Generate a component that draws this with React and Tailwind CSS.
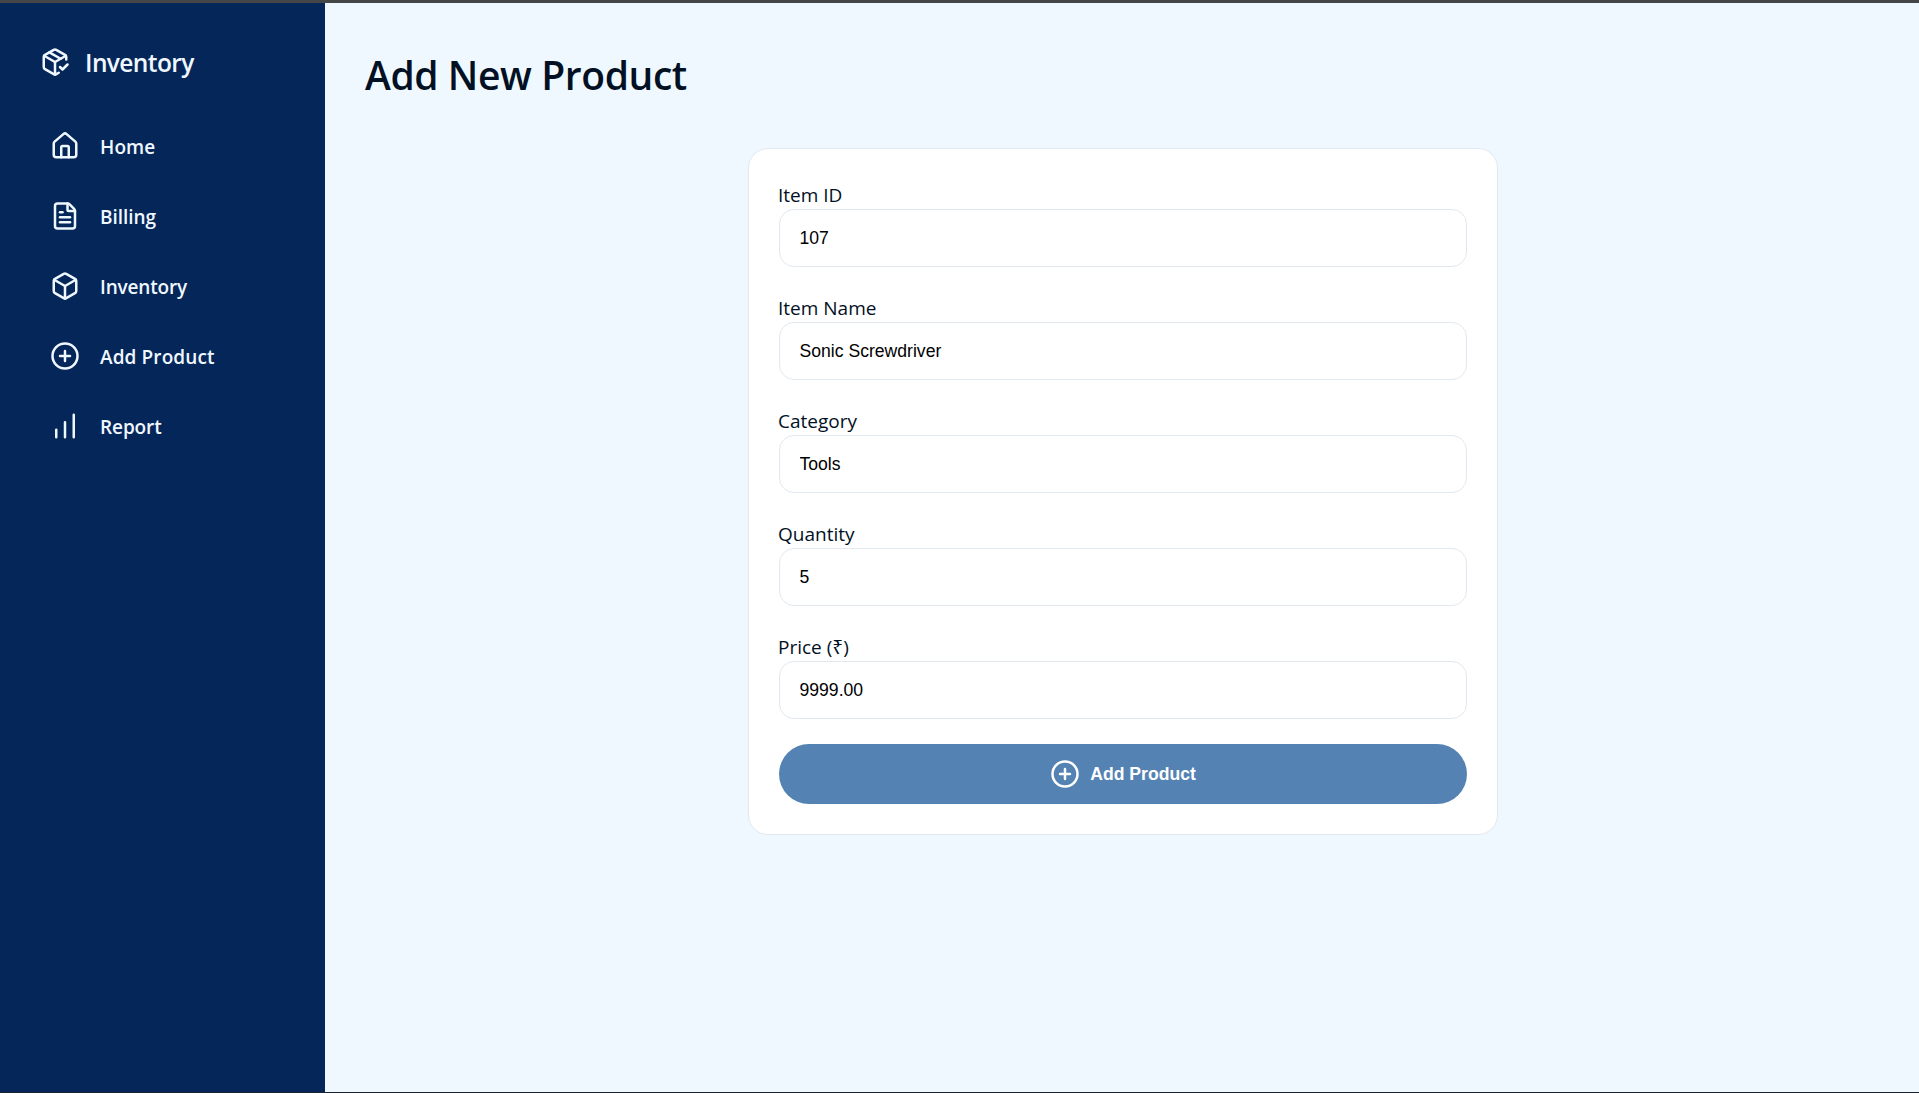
import { House, FileText, Box, CirclePlus, PackageCheck } from "lucide-react";

function Bars({ size }) {
  return (
    <svg width={size} height={size} viewBox="0 0 24 24" fill="none" stroke="currentColor" strokeWidth="2" strokeLinecap="round">
      <path d="M5 21v-6M12 21V9M19 21V3" />
    </svg>
  );
}

const nav = [
  { label: "Home", Icon: House, text: "tracking-[0.1px]" },
  { label: "Billing", Icon: FileText, text: "tracking-[-0.05px]" },
  { label: "Inventory", Icon: Box, text: "tracking-[-0.17px]" },
  { label: "Add Product", Icon: CirclePlus, text: "tracking-[0.1px]" },
  { label: "Report", Icon: Bars, text: "tracking-[-0.1px]" },
];

const fields = [
  { label: "Item ID", value: "107" },
  { label: "Item Name", value: "Sonic Screwdriver" },
  { label: "Category", value: "Tools" },
  { label: "Quantity", value: "5" },
  { label: "Price (₹)", value: "9999.00" },
];

export default function App() {
  return (
    <div className="flex h-[1093px] border-t-3 border-b border-t-[#444648] border-b-[#1b2230] bg-[#f0f8ff] font-['Open_Sans','Noto_Sans',sans-serif] text-[#021024]">
      <aside className="w-[325px] shrink-0 bg-[#052659] text-[#f0f8ff]">
        <div className="flex h-[76px] items-center gap-[15px] pt-[42px] pl-10">
          <PackageCheck size={30} />
          <span className="pt-0.5 text-[24.5px] leading-[34px] font-semibold tracking-[-0.6px]">Inventory</span>
        </div>
        <nav className="mt-[52px] flex flex-col gap-10 pl-[50px]">
          {nav.map(({ label, Icon, text }) => (
            <a key={label} className="flex h-[30px] items-center gap-5">
              <Icon size={30} />
              <span className={`${text} pt-[3px] text-[19px] font-semibold`}>{label}</span>
            </a>
          ))}
        </nav>
      </aside>
      <main className="flex-1 px-10">
        <h1 className="mt-[45px] text-[39px] leading-[54px] font-semibold tracking-[-0.4px]">Add New Product</h1>
        <div className="mt-[46px] flex justify-center pl-0.5">
          <form className="flex w-[750px] flex-col gap-[25px] rounded-[20px] border border-[#e2e8f0] bg-white p-[30px]">
            {fields.map(({ label, value }) => (
              <label key={label} className="block">
                <span className="-ml-px block h-[30px] text-[19px] leading-[32px]">{label}</span>
                <input
                  defaultValue={value}
                  className="block h-[58px] w-full rounded-[15px] border border-[#e2e8f0] bg-white px-[19.5px] font-['Liberation_Sans',sans-serif] text-[17.6px] text-black outline-none"
                />
              </label>
            ))}
            <button type="button" className="flex h-[60px] items-center justify-center gap-2.5 rounded-full bg-[#5483b3] font-['Liberation_Sans',sans-serif] text-[17.6px] font-bold text-white">
              <CirclePlus size={30} />
              Add Product
            </button>
          </form>
        </div>
      </main>
    </div>
  );
}
